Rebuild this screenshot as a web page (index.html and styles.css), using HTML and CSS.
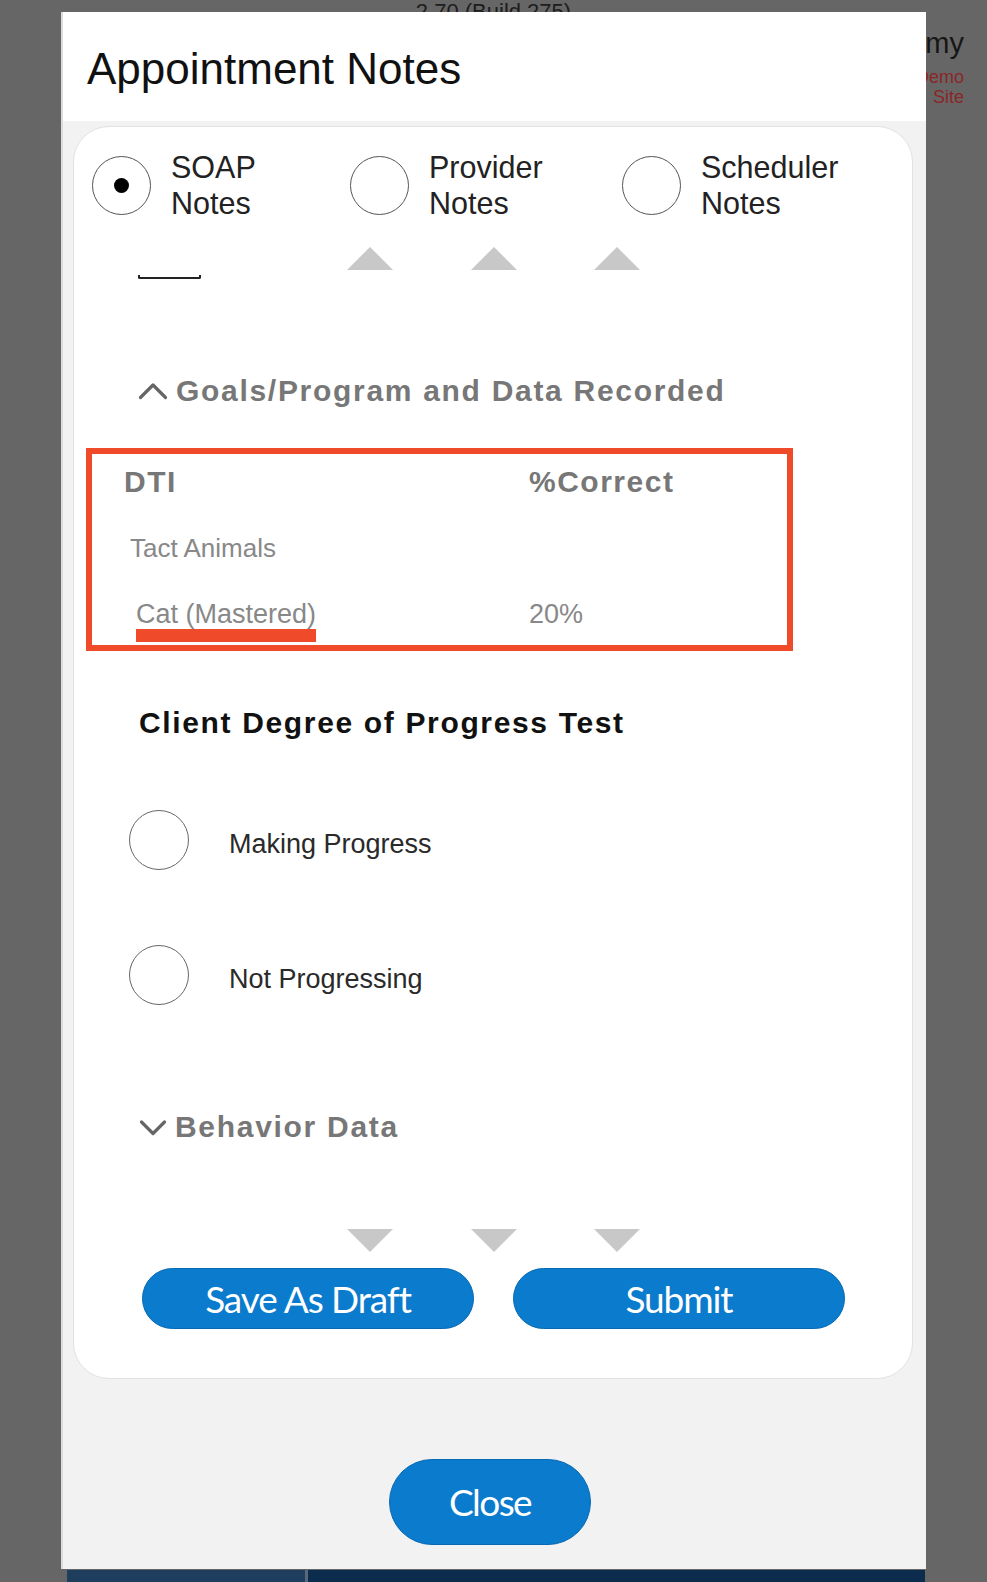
FILE: index.html
```html
<!DOCTYPE html>
<html lang="en">
<head>
<meta charset="utf-8">
<title>Appointment Notes</title>
<link rel="stylesheet" href="styles.css">
</head>
<body>
<div class="page">
  <div class="version">2.70 (Build 275)</div>
  <div class="brand">
    <div class="brand-name">Academy</div>
    <div class="brand-sub">Demo</div>
    <div class="brand-sub">Site</div>
  </div>
  <div class="page-footer">
    <div class="footer-left"></div>
    <div class="footer-div"></div>
    <div class="footer-right"></div>
  </div>
</div>

<div class="modal">
  <div class="modal-header">
    <h1 class="modal-title">Appointment Notes</h1>
  </div>
  <div class="modal-body">
    <div class="card">
      <div class="note-types">
        <div class="opt">
          <span class="radio checked"><span class="dot"></span></span>
          <span class="opt-label">SOAP<br>Notes</span>
        </div>
        <div class="opt">
          <span class="radio"></span>
          <span class="opt-label">Provider<br>Notes</span>
        </div>
        <div class="opt">
          <span class="radio"></span>
          <span class="opt-label">Scheduler<br>Notes</span>
        </div>
      </div>

      <div class="arrows">
        <span class="tri-up"></span>
        <span class="tri-up"></span>
        <span class="tri-up"></span>
      </div>
      <div class="bracket"></div>

      <div class="section-head goals-head">
        <svg class="chev" width="30" height="20" viewBox="0 0 30 20"><polyline points="2.5,17.5 15,5 27.5,17.5" fill="none" stroke="#666" stroke-width="3.2" stroke-linecap="round" stroke-linejoin="round"/></svg>
        <span>Goals/Program and Data Recorded</span>
      </div>

      <div class="dti-box">
        <div class="dti-row dti-head">
          <span class="c1">DTI</span>
          <span class="c2">%Correct</span>
        </div>
        <div class="dti-row dti-group">
          <span class="c1">Tact Animals</span>
        </div>
        <div class="dti-row dti-item">
          <span class="c1"><span class="marked">Cat (Mastered)</span></span>
          <span class="c2">20%</span>
        </div>
      </div>

      <div class="progress-title">Client Degree of Progress Test</div>

      <div class="choice first">
        <span class="radio big"></span>
        <span class="choice-label">Making Progress</span>
      </div>
      <div class="choice second">
        <span class="radio big"></span>
        <span class="choice-label">Not Progressing</span>
      </div>

      <div class="section-head behavior-head">
        <svg class="chev" width="28" height="17" viewBox="0 0 28 17"><polyline points="2.5,3 14,14.5 25.5,3" fill="none" stroke="#666" stroke-width="3.2" stroke-linecap="round" stroke-linejoin="round"/></svg>
        <span>Behavior Data</span>
      </div>

      <div class="arrows down">
        <span class="tri-down"></span>
        <span class="tri-down"></span>
        <span class="tri-down"></span>
      </div>

      <div class="actions">
        <button class="btn">Save As Draft</button>
        <button class="btn">Submit</button>
      </div>
    </div>

    <button class="btn close-btn">Close</button>
  </div>
</div>
</body>
</html>
```
FILE: styles.css
```css
* { box-sizing: border-box; }
html, body { margin: 0; padding: 0; }
body {
  background: #666666;
  font-family: "Liberation Sans", Arial, sans-serif;
  width: 987px;
  height: 1582px;
  overflow: hidden;
  position: relative;
}

/* background page (under overlay) */
.page {
  height: 1582px;
  display: flex;
  flex-direction: column;
}
.version {
  text-align: center;
  font-size: 22px;
  line-height: 22px;
  margin-top: 1px;
  color: #1d1d1d;
}
.brand {
  text-align: right;
  padding-right: 23px;
  margin-top: 4px;
}
.brand-name {
  font-size: 29px;
  line-height: 32px;
  color: #161616;
}
.brand-sub {
  font-size: 18px;
  line-height: 20px;
  color: #8a2626;
}
.brand-name + .brand-sub { margin-top: 8px; }
.page-footer {
  margin: auto 62px 0 67px;
  height: 12px;
  display: flex;
}
.footer-left { width: 238px; background: #1f3d5c; }
.footer-div { width: 3px; background: #56687b; }
.footer-right { flex: 1; background: #0c2c4d; }

/* modal overlay */
.modal {
  position: absolute;
  left: 61px;
  top: 12px;
  width: 865px;
  height: 1557px;
  background: #f2f2f2;
  display: flex;
  flex-direction: column;
  border-left: 2px solid #dcdcdc;
}
.modal-header {
  height: 109px;
  background: #ffffff;
  padding: 32px 0 0 24px;
  flex: none;
}
.modal-title {
  margin: 0;
  font-size: 44px;
  line-height: 50px;
  font-weight: 400;
  color: #111;
}
.modal-body {
  flex: 1;
  padding: 5px 13px 0 10px;
  display: flex;
  flex-direction: column;
}

.card {
  background: #ffffff;
  border: 1px solid #e2e2e2;
  border-radius: 36px;
  padding: 22px 0 49px 0;
}

/* note type radios */
.note-types {
  display: grid;
  grid-template-columns: 258px 272px auto;
  padding-left: 18px;
}
.opt {
  display: flex;
  align-items: center;
  gap: 20px;
}
.opt-label {
  font-size: 30.5px;
  line-height: 36px;
  color: #222;
}
.radio {
  flex: none;
  width: 59px;
  height: 59px;
  border: 1.5px solid #555;
  border-radius: 50%;
  display: flex;
  align-items: center;
  justify-content: center;
  background: #fff;
}
.radio .dot {
  width: 15px;
  height: 15px;
  border-radius: 50%;
  background: #000;
}

/* arrow indicators */
.arrows {
  display: flex;
  gap: 77.5px;
  padding-left: 273px;
  margin-top: 26px;
}
.tri-up {
  width: 0;
  height: 0;
  border-left: 23px solid transparent;
  border-right: 23px solid transparent;
  border-bottom: 23px solid #c8c8c8;
}
.tri-down {
  width: 0;
  height: 0;
  border-left: 23px solid transparent;
  border-right: 23px solid transparent;
  border-top: 23px solid #c8c8c8;
}
.bracket {
  margin: 5px 0 0 64px;
  width: 63px;
  height: 4px;
  border: 2px solid #222;
  border-top: none;
  border-radius: 0 0 2px 2px;
}

/* section headings */
.section-head {
  display: flex;
  align-items: center;
  gap: 8px;
  margin-left: 64px;
  font-size: 30px;
  font-weight: 700;
  letter-spacing: 1.7px;
  line-height: 36px;
  color: #777;
}
.goals-head { margin-top: 94px; }
.goals-head .chev { margin-top: -2px; }
.behavior-head { margin-top: 104px; margin-left: 65px; }

/* DTI table */
.dti-box {
  margin: 39px 0 0 12px;
  width: 707px;
  border: 6px solid #ef4a29;
  padding: 10px 0 3px 0;
}
.dti-row {
  display: grid;
  grid-template-columns: 437px 1fr;
}
.dti-head {
  font-size: 30px;
  font-weight: 700;
  letter-spacing: 1.5px;
  line-height: 36px;
  color: #777;
}
.dti-head .c1 { padding-left: 32px; }
.dti-group {
  margin-top: 33px;
  font-size: 26px;
  line-height: 30px;
  color: #888;
}
.dti-group .c1 { padding-left: 38px; }
.dti-item {
  margin-top: 36px;
  font-size: 27px;
  line-height: 30px;
  color: #888;
}
.dti-item .c1 { padding-left: 44px; }
.marked {
  display: inline-block;
  border-bottom: 13px solid #ef4a29;
}

/* progress */
.progress-title {
  margin: 54px 0 0 65px;
  font-size: 30px;
  font-weight: 700;
  letter-spacing: 1.65px;
  line-height: 36px;
  color: #111;
}
.choice {
  display: flex;
  align-items: center;
  gap: 40px;
  margin-left: 55px;
}
.choice.first { margin-top: 69px; }
.choice.second { margin-top: 75px; }
.radio.big { width: 60px; height: 60px; border-color: #666; }
.choice-label {
  font-size: 27px;
  line-height: 30px;
  color: #2a2a2a;
  padding-top: 7px;
}

.arrows.down { margin-top: 84px; }

/* buttons */
.actions {
  display: flex;
  gap: 39px;
  margin: 16px 0 0 68px;
}
.btn {
  font-family: Lato, "Open Sans", sans-serif;
  font-size: 37px;
  letter-spacing: -1.1px;
  color: #ffffff;
  background: #0a7bcd;
  border: 1.5px solid #0869b3;
  border-radius: 31px;
  width: 332px;
  height: 61px;
  padding: 0;
  line-height: 58px;
  text-align: center;
}
.close-btn {
  width: 202px;
  height: 86px;
  border-radius: 43px;
  margin: 80px 0 0 316px;
  line-height: 82px;
  letter-spacing: -1.6px;
}
```
